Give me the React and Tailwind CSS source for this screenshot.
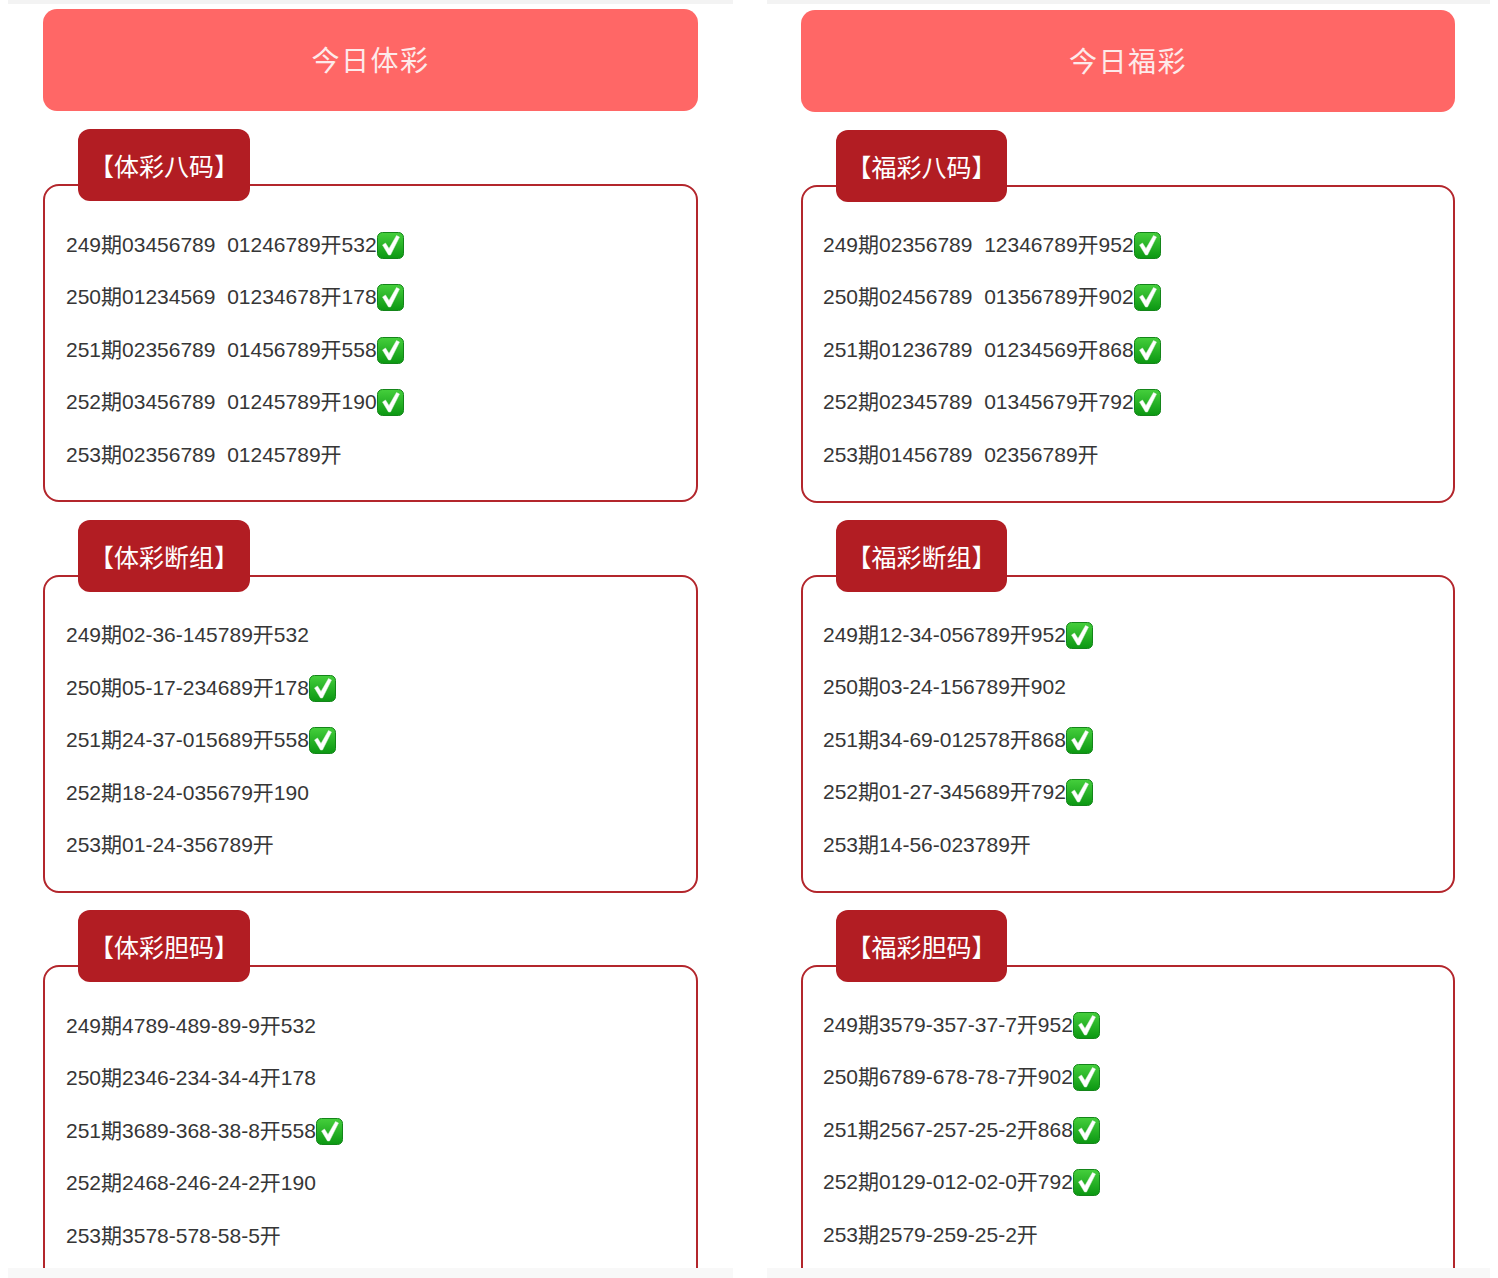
const leftSections = [
  {
    title: "【体彩八码】",
    rows: [
      ["249期03456789\u00a0\u00a001246789开532", true],
      ["250期01234569\u00a0\u00a001234678开178", true],
      ["251期02356789\u00a0\u00a001456789开558", true],
      ["252期03456789\u00a0\u00a001245789开190", true],
      ["253期02356789\u00a0\u00a001245789开", false],
    ],
  },
  {
    title: "【体彩断组】",
    rows: [
      ["249期02-36-145789开532", false],
      ["250期05-17-234689开178", true],
      ["251期24-37-015689开558", true],
      ["252期18-24-035679开190", false],
      ["253期01-24-356789开", false],
    ],
  },
  {
    title: "【体彩胆码】",
    rows: [
      ["249期4789-489-89-9开532", false],
      ["250期2346-234-34-4开178", false],
      ["251期3689-368-38-8开558", true],
      ["252期2468-246-24-2开190", false],
      ["253期3578-578-58-5开", false],
    ],
  },
];

const rightSections = [
  {
    title: "【福彩八码】",
    rows: [
      ["249期02356789\u00a0\u00a012346789开952", true],
      ["250期02456789\u00a0\u00a001356789开902", true],
      ["251期01236789\u00a0\u00a001234569开868", true],
      ["252期02345789\u00a0\u00a001345679开792", true],
      ["253期01456789\u00a0\u00a002356789开", false],
    ],
  },
  {
    title: "【福彩断组】",
    rows: [
      ["249期12-34-056789开952", true],
      ["250期03-24-156789开902", false],
      ["251期34-69-012578开868", true],
      ["252期01-27-345689开792", true],
      ["253期14-56-023789开", false],
    ],
  },
  {
    title: "【福彩胆码】",
    rows: [
      ["249期3579-357-37-7开952", true],
      ["250期6789-678-78-7开902", true],
      ["251期2567-257-25-2开868", true],
      ["252期0129-012-02-0开792", true],
      ["253期2579-259-25-2开", false],
    ],
  },
];

// green check emoji, no emoji font in the sandbox
const CheckMark = () => (
  <svg viewBox="0 0 27 27" className="mt-[2px] h-[27px] w-[27px] shrink-0">
    <defs>
      <linearGradient id="checkBg" x1="0" y1="0" x2="0" y2="1">
        <stop offset="0" stopColor="#45cf3c" />
        <stop offset="1" stopColor="#0b9712" />
      </linearGradient>
    </defs>
    <rect x="0.5" y="0.5" width="26" height="26" rx="5" fill="url(#checkBg)" stroke="#14851a" strokeWidth="1" />
    <path
      d="M5.5 13 L8.5 11 L12 16.5 L19.5 3.5 L22.5 5 L13.5 23 L11.5 23 Z"
      fill="#ffffff"
      stroke="#dff3df"
      strokeWidth="0.5"
      strokeLinejoin="round"
    />
  </svg>
);

const Section = ({ title, rows, tabClass, rowsClass, gapClass }) => (
  <div className={gapClass}>
    <div
      className={`relative z-10 -mb-[17px] ml-[35px] flex h-[72px] items-center justify-center rounded-[12px] bg-[#b21d23] pt-[6px] text-[25px] text-white ${tabClass}`}
    >
      {title}
    </div>
    <div className={`rounded-[16px] border-2 border-[#b3262c] bg-white ${rowsClass}`}>
      {rows.map(([text, hit]) => (
        <div key={text} className="flex h-[52.5px] items-center text-[21px] text-[#363636]">
          <span>{text}</span>
          {hit && <CheckMark />}
        </div>
      ))}
    </div>
  </div>
);

const Column = ({ heading, sections, widthClass, innerClass, tabClass, rowsClass, gapClass }) => (
  <div className={`flex h-full flex-col ${widthClass}`}>
    <div className="h-[4px] shrink-0 bg-[#f3f3f3]" />
    <div className={`min-h-0 flex-1 overflow-hidden ${innerClass}`}>
      <div className="flex h-[102px] items-center justify-center rounded-[14px] bg-[#ff6766] pt-[3px] text-[28px] tracking-[1.5px] text-[#fdeaea]">
        {heading}
      </div>
      <div className="mt-[18px]">
        {sections.map((s) => (
          <Section
            key={s.title}
            title={s.title}
            rows={s.rows}
            tabClass={tabClass}
            rowsClass={rowsClass}
            gapClass={gapClass}
          />
        ))}
      </div>
    </div>
    <div className="h-[10px] shrink-0 bg-[#f8f8f8]" />
  </div>
);

export default function App() {
  return (
    <div className="flex h-[1278px] w-[1498px] gap-[34px] overflow-hidden bg-white pl-[8px] font-['Liberation_Sans','Noto_Sans_CJK_SC',sans-serif]">
      <Column
        heading="今日体彩"
        sections={leftSections}
        widthClass="w-[725px]"
        innerClass="mx-[35px] pt-[5px]"
        tabClass="w-[172px]"
        rowsClass="pb-[19.5px] pl-[21px] pt-[32px]"
        gapClass="mb-[17.5px]"
      />
      <Column
        heading="今日福彩"
        sections={rightSections}
        widthClass="w-[723px]"
        innerClass="ml-[34px] mr-[35px] pt-[6px]"
        tabClass="w-[171px]"
        rowsClass="pb-[20.5px] pl-[20px] pt-[31px]"
        gapClass="mb-[17px]"
      />
    </div>
  );
}
